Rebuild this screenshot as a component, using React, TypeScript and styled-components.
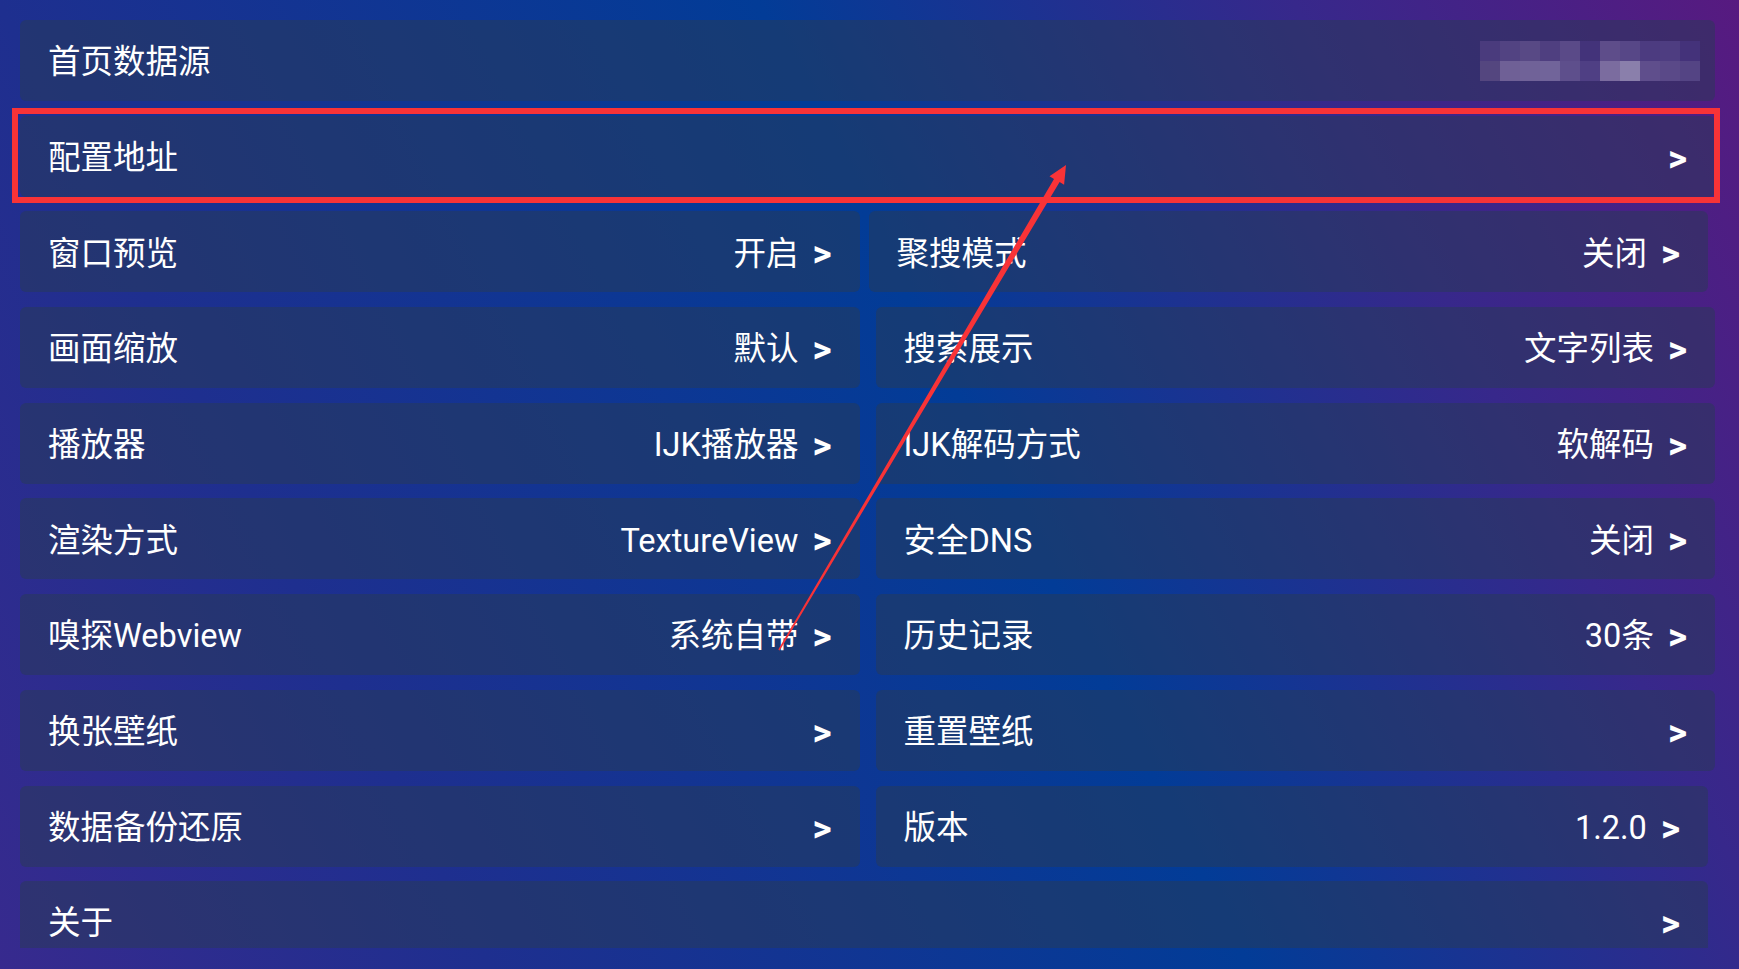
import styled, { createGlobalStyle } from 'styled-components';

type Item = { label: string; value?: string };

const GlobalStyle = createGlobalStyle`
  html, body {
    margin: 0;
    padding: 0;
  }
  body {
    font-family: Roboto, "Noto Sans CJK SC", sans-serif;
    overflow: hidden;
  }
`;

const MOSAIC = [
  ['#4a3b7d', '#524382', '#584985', '#4f3f80', '#5a4a88', '#43337a', '#5e4d8a', '#574787', '#4c3b80', '#4e3d81', '#44327a'],
  ['#54467f', '#6f6096', '#706298', '#71649a', '#5e4f8c', '#4f3f84', '#7b6c9f', '#8a7fab', '#5f4e8c', '#5a4988', '#544484'],
];

const PAIRS: { left: Item; right: Item; nudge?: boolean; trim?: boolean }[] = [
  { left: { label: '窗口预览', value: '开启' }, right: { label: '聚搜模式', value: '关闭' }, nudge: true },
  { left: { label: '画面缩放', value: '默认' }, right: { label: '搜索展示', value: '文字列表' } },
  { left: { label: '播放器', value: 'IJK播放器' }, right: { label: 'IJK解码方式', value: '软解码' } },
  { left: { label: '渲染方式', value: 'TextureView' }, right: { label: '安全DNS', value: '关闭' } },
  { left: { label: '嗅探Webview', value: '系统自带' }, right: { label: '历史记录', value: '30条' } },
  { left: { label: '换张壁纸' }, right: { label: '重置壁纸' } },
  { left: { label: '数据备份还原' }, right: { label: '版本', value: '1.2.0' }, trim: true },
];

const App = () => {
  return (
    <>
      <GlobalStyle />
      <Screen>
        <List>
          <Card>
            <Label>首页数据源</Label>
            <Mosaic>
              {MOSAIC.flat().map((c, i) => (
                <Cell key={i} $c={c} />
              ))}
            </Mosaic>
          </Card>
          <Card $focused>
            <Label>配置地址</Label>
            <Trail>
              <Arrow>&gt;</Arrow>
            </Trail>
          </Card>
          {PAIRS.map(({ left, right, nudge, trim }) => (
            <Pair key={left.label}>
              <Card>
                <Label>{left.label}</Label>
                <Trail>
                  {left.value && <Value>{left.value}</Value>}
                  <Arrow>&gt;</Arrow>
                </Trail>
              </Card>
              <Card $nudge={nudge} $trim={trim}>
                <Label>{right.label}</Label>
                <Trail>
                  {right.value && <Value>{right.value}</Value>}
                  <Arrow>&gt;</Arrow>
                </Trail>
              </Card>
            </Pair>
          ))}
          <Card $trim $last>
            <Label>关于</Label>
            <Trail>
              <Arrow>&gt;</Arrow>
            </Trail>
          </Card>
        </List>
        <Annotation width='1739' height='969' viewBox='0 0 1739 969'>
          <polygon
            fill='#f83337'
            points='778.3,649.6 1054.0,178.9 1049.5,176.2 1066,165 1064.1,184.8 1059.6,182.1 779.7,650.4'
          />
        </Annotation>
      </Screen>
    </>
  );
};

const Screen = styled.div`
  position: relative;
  box-sizing: border-box;
  width: 100vw;
  height: 100vh;
  min-height: 969px;
  padding: 20px 24px 21px 20px;
  overflow: hidden;
  background: linear-gradient(
    63deg,
    #372a8e 0%,
    #1e2f8f 22%,
    #023c97 56%,
    #37288b 80%,
    #571a80 100%
  );
`;

/* clip only the bottom so the focus frame can spill out at the sides */
const List = styled.div`
  display: flex;
  flex-direction: column;
  gap: 14.7px;
  height: 100%;
  clip-path: inset(-20px -24px 0 -20px);
`;

const Pair = styled.div`
  display: grid;
  grid-template-columns: 1fr 1fr;
  column-gap: 16px;
  flex-shrink: 0;
`;

const Card = styled.div<{ $focused?: boolean; $nudge?: boolean; $trim?: boolean; $last?: boolean }>`
  position: relative;
  box-sizing: border-box;
  display: flex;
  align-items: center;
  flex-shrink: 0;
  height: 81px;
  padding: 4px 28px 0;
  margin-left: ${({ $nudge }) => ($nudge ? '-7px' : '0')};
  margin-right: ${({ $nudge, $trim }) => ($nudge || $trim ? '7px' : '0')};
  border-radius: ${({ $last }) => ($last ? '6px 6px 0 0' : '6px')};
  background: rgba(40, 60, 84, 0.49);
  color: #ffffff;
  font-size: 32.5px;
  line-height: 1;
  white-space: nowrap;

  ${({ $focused }) =>
    $focused &&
    `
    &::after {
      content: '';
      position: absolute;
      top: -8px;
      left: -8.5px;
      right: -4.5px;
      bottom: -6px;
      border: 6.5px solid #f83337;
      pointer-events: none;
    }
  `}
`;

const Label = styled.span``;

const Trail = styled.div`
  display: flex;
  align-items: center;
  gap: 14px;
  margin-left: auto;
`;

const Value = styled.span``;

const Arrow = styled.span`
  font-family: Roboto, sans-serif;
  font-size: 37px;
  font-weight: 700;
`;

const Mosaic = styled.div`
  display: grid;
  grid-template-columns: repeat(11, 20px);
  grid-auto-rows: 20px;
  margin: -4px -13px 0 auto;
`;

const Cell = styled.i<{ $c: string }>`
  display: block;
  background: ${({ $c }) => $c};
`;

const Annotation = styled.svg`
  position: absolute;
  left: 0;
  top: 0;
  pointer-events: none;
`;

export default App;
